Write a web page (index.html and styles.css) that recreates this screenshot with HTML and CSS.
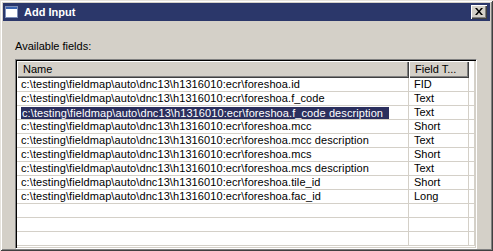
FILE: index.html
```html
<!DOCTYPE html>
<html>
<head>
<meta charset="utf-8">
<link rel="stylesheet" href="styles.css">
</head>
<body>
<div class="window">
  <div class="titlebar">
    <svg class="ticon" width="13" height="12" viewBox="0 0 13 12">
      <rect x="0.5" y="0.5" width="12" height="11" fill="#ffffff" stroke="#7d8fb8"/>
      <rect x="1" y="1" width="11" height="2" fill="#3b64b0"/>
    </svg>
    <span class="title">Add Input</span>
    <span class="close">
      <svg width="8" height="7" viewBox="0 0 8 7"><path d="M0 0h2l2 2.5L6 0h2L5 3.5 8 7H6L4 4.5 2 7H0l3-3.5z" fill="#000"/></svg>
    </span>
  </div>
  <div class="content">
    <div class="label">Available fields:</div>
    <div class="list">
      <div class="header">
        <div class="hc hname">Name</div>
        <div class="hc htype">Field T...</div>
        <div class="hc hfill"></div>
      </div>
      <div class="row"><div class="c cname">c:\testing\fieldmap\auto\dnc13\h1316010:ecr\foreshoa.id</div><div class="c ctype">FID</div><div class="c cfill"></div></div>
      <div class="row"><div class="c cname">c:\testing\fieldmap\auto\dnc13\h1316010:ecr\foreshoa.f_code</div><div class="c ctype">Text</div><div class="c cfill"></div></div>
      <div class="row"><div class="c cname"><span class="sel">c:\testing\fieldmap\auto\dnc13\h1316010:ecr\foreshoa.f_code description</span></div><div class="c ctype">Text</div><div class="c cfill"></div></div>
      <div class="row"><div class="c cname">c:\testing\fieldmap\auto\dnc13\h1316010:ecr\foreshoa.mcc</div><div class="c ctype">Short</div><div class="c cfill"></div></div>
      <div class="row"><div class="c cname">c:\testing\fieldmap\auto\dnc13\h1316010:ecr\foreshoa.mcc description</div><div class="c ctype">Text</div><div class="c cfill"></div></div>
      <div class="row"><div class="c cname">c:\testing\fieldmap\auto\dnc13\h1316010:ecr\foreshoa.mcs</div><div class="c ctype">Short</div><div class="c cfill"></div></div>
      <div class="row"><div class="c cname">c:\testing\fieldmap\auto\dnc13\h1316010:ecr\foreshoa.mcs description</div><div class="c ctype">Text</div><div class="c cfill"></div></div>
      <div class="row"><div class="c cname">c:\testing\fieldmap\auto\dnc13\h1316010:ecr\foreshoa.tile_id</div><div class="c ctype">Short</div><div class="c cfill"></div></div>
      <div class="row"><div class="c cname">c:\testing\fieldmap\auto\dnc13\h1316010:ecr\foreshoa.fac_id</div><div class="c ctype">Long</div><div class="c cfill"></div></div>
      <div class="row"><div class="c cname"></div><div class="c ctype"></div><div class="c cfill"></div></div>
      <div class="row"><div class="c cname"></div><div class="c ctype"></div><div class="c cfill"></div></div>
      <div class="row"><div class="c cname"></div><div class="c ctype"></div><div class="c cfill"></div></div>
    </div>
  </div>
</div>
</body>
</html>
```

FILE: styles.css
```css
html, body {
  margin: 0;
  padding: 0;
  background: #d4d0c8;
}
body {
  width: 493px;
  height: 251px;
  overflow: hidden;
  font-family: "Liberation Sans", Arial, sans-serif;
  font-size: 11px;
}
.window {
  box-sizing: border-box;
  width: 493px;
  height: 251px;
  background: #d4d0c8;
  padding: 3px 3px 0 3px;
  box-shadow: inset 1px 1px 0 #e6e3dd, inset -1px -1px 0 #404040, inset 2px 2px 0 #ffffff, inset -2px -2px 0 #808080;
  overflow: hidden;
}
.titlebar {
  height: 18px;
  background: #2b376a;
  display: flex;
  align-items: center;
  padding: 0 3px 0 2px;
}
.ticon {
  flex: none;
  display: block;
}
.title {
  color: #ffffff;
  font-weight: bold;
  font-size: 11px;
  margin-left: 6px;
  flex: 1;
}
.close {
  width: 16px;
  height: 14px;
  box-sizing: border-box;
  background: #d4d0c8;
  box-shadow: inset 1px 1px 0 #ffffff, inset -1px -1px 0 #404040, inset -2px -2px 0 #808080;
  display: flex;
  align-items: center;
  justify-content: center;
  padding-bottom: 1px;
}
.close svg { display: block; }
.content {
  padding: 19px 0 0 12px;
}
.label {
  line-height: 13px;
  color: #000;
}
.list {
  margin-top: 6px;
  width: 462px;
  height: 190px;
  box-sizing: border-box;
  border-top: 1px solid #808080;
  border-left: 1px solid #808080;
  border-right: 1px solid #ffffff;
  border-bottom: 1px solid #ffffff;
  box-shadow: inset 1px 1px 0 #000000, inset -1px -1px 0 #d4d0c8;
  padding: 1px 1px 1px 1px;
  background: #ffffff;
  overflow: hidden;
}
.header {
  display: grid;
  grid-template-columns: 392px 60px 6px;
  height: 17px;
}
.hc {
  box-sizing: border-box;
  background: #d4d0c8;
  box-shadow: inset 1px 1px 0 #ffffff, inset -1px -1px 0 #404040, inset -2px -2px 0 #808080;
  line-height: 16px;
  padding-left: 6px;
  white-space: nowrap;
  color: #000;
}
.hfill {
  background: #ffffff;
  box-shadow: inset -1px 0 0 #d4d0c8;
}
.row {
  display: grid;
  grid-template-columns: 392px 60px 6px;
  height: 14px;
}
.c {
  box-sizing: border-box;
  border-right: 1px solid #d4d0c8;
  border-bottom: 1px solid #d4d0c8;
  line-height: 13px;
  padding-left: 5px;
  white-space: nowrap;
  overflow: hidden;
  color: #000;
}
.cname {
  padding-left: 4px;
  letter-spacing: 0.09px;
}
.sel {
  display: inline-block;
  background: #2b2f5e;
  color: #ffffff;
  padding: 0 6px 0 1px;
  line-height: 12px;
  margin-top: 1px;
}
```
